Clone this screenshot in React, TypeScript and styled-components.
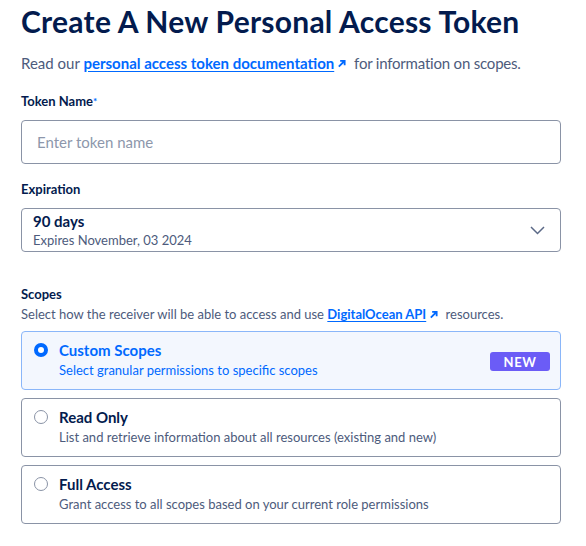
import React from "react";
import styled, { createGlobalStyle } from "styled-components";

const Global = createGlobalStyle`
  html, body { margin: 0; padding: 0; background: #ffffff; }
  body { font-family: Lato, "Noto Sans", sans-serif; color: #031b4e; }
  * { box-sizing: border-box; }
`;

const Page = styled.div`
  padding: 2px 25px 0 21px;
  display: flex;
  flex-direction: column;
`;

const Title = styled.h1`
  margin: 0;
  font-size: 30px;
  line-height: 38px;
  font-weight: 700;
  letter-spacing: 0.25px;
  color: #031b4e;
`;

const Lead = styled.p`
  margin: 13px 0 0;
  font-size: 15px;
  line-height: 20px;
  color: #4d5b7c;
`;

const Tail = styled.span`
  letter-spacing: -0.2px;
`;

const Link = styled.a`
  color: #0069ff;
  font-weight: 700;
  text-decoration: underline;
  text-underline-offset: 2px;
  display: inline-flex;
  align-items: center;
  gap: 3px;
  margin-right: 4px;
`;

const Field = styled.div<{ $top: number }>`
  margin-top: ${(p) => p.$top}px;
  display: flex;
  flex-direction: column;
`;

const Label = styled.label`
  font-size: 13px;
  line-height: 18px;
  font-weight: 700;
  color: #031b4e;
  margin-bottom: 10px;
`;

const SectionLabel = styled.div`
  font-size: 13px;
  line-height: 18px;
  font-weight: 700;
  color: #031b4e;
`;

const Star = styled.span`
  color: #0069ff;
  font-size: 10px;
  vertical-align: top;
`;

const Input = styled.input`
  height: 44px;
  width: 100%;
  border: 1px solid #8a93a6;
  border-radius: 4px;
  padding: 0 15px;
  font-family: inherit;
  font-size: 15px;
  color: #031b4e;
  &::placeholder { color: #8d97ab; }
`;

const Select = styled.div`
  height: 44px;
  border: 1px solid #8a93a6;
  border-radius: 4px;
  padding: 0 15px 0 11px;
  display: flex;
  align-items: center;
  justify-content: space-between;
`;

const SelectText = styled.div`
  display: flex;
  flex-direction: column;
`;

const SelectValue = styled.span`
  font-size: 15px;
  line-height: 20px;
  font-weight: 700;
  color: #031b4e;
`;

const SelectHint = styled.span`
  font-size: 13px;
  line-height: 18px;
  color: #4d5b7c;
`;

const Desc = styled.p`
  margin: 2px 0 8px;
  font-size: 13px;
  line-height: 18px;
  color: #4d5b7c;
`;

const Cards = styled.div`
  display: flex;
  flex-direction: column;
  gap: 8px;
`;

const Card = styled.div<{ $active?: boolean }>`
  height: 59px;
  border: 1px solid ${(p) => (p.$active ? "#8ab6f9" : "#8a93a6")};
  background: ${(p) => (p.$active ? "#f3f7fe" : "#ffffff")};
  border-radius: 4px;
  padding: 8px 10px 0 12px;
  display: grid;
  grid-template-columns: 25px 1fr auto;
`;

const Radio = styled.span<{ $active?: boolean }>`
  margin-top: 3px;
  width: 14px;
  height: 14px;
  border-radius: 50%;
  border: ${(p) => (p.$active ? "4px solid #0069ff" : "1px solid #8a93a6")};
  background: #fff;
`;

const CardBody = styled.div`
  display: flex;
  flex-direction: column;
`;

const CardTitle = styled.span<{ $active?: boolean }>`
  font-size: 15px;
  line-height: 20px;
  font-weight: 700;
  color: ${(p) => (p.$active ? "#0069ff" : "#031b4e")};
`;

const CardDesc = styled.span<{ $active?: boolean }>`
  margin-top: 1px;
  font-size: 13px;
  line-height: 18px;
  color: ${(p) => (p.$active ? "#0069ff" : "#4d5b7c")};
`;

const Badge = styled.span`
  align-self: start;
  margin-top: 12px;
  width: 60px;
  height: 19px;
  border-radius: 3px;
  background: #6b5cf6;
  color: #fff;
  font-size: 13px;
  font-weight: 700;
  letter-spacing: 0.6px;
  display: flex;
  align-items: center;
  justify-content: center;
`;

const Arrow = () => (
  <svg width="9" height="9" viewBox="0 0 10 10" fill="none">
    <path d="M2 8.5 L8 2.5 M3.5 2 H8.5 V7" stroke="#0069ff" strokeWidth="2" />
  </svg>
);

const Chevron = () => (
  <svg width="15" height="9" viewBox="0 0 15 9" fill="none">
    <path d="M1 1 L7.5 7.5 L14 1" stroke="#5b6987" strokeWidth="1.5" />
  </svg>
);

const scopes = [
  { title: "Custom Scopes", desc: "Select granular permissions to specific scopes", active: true, badge: true },
  { title: "Read Only", desc: "List and retrieve information about all resources (existing and new)" },
  { title: "Full Access", desc: "Grant access to all scopes based on your current role permissions" },
];

export default function App() {
  return (
    <>
      <Global />
      <Page>
        <Title>Create A New Personal Access Token</Title>
        <Lead>
          Read our{" "}
          <Link href="#">
            personal access token documentation <Arrow />
          </Link>{" "}
          <Tail>for information on scopes.</Tail>
        </Lead>
        <Field $top={19}>
          <Label>
            Token Name<Star>*</Star>
          </Label>
          <Input placeholder="Enter token name" />
        </Field>
        <Field $top={16}>
          <Label>Expiration</Label>
          <Select>
            <SelectText>
              <SelectValue>90 days</SelectValue>
              <SelectHint>Expires November, 03 2024</SelectHint>
            </SelectText>
            <Chevron />
          </Select>
        </Field>
        <Field $top={33}>
          <SectionLabel>Scopes</SectionLabel>
          <Desc>
            Select how the receiver will be able to access and use{" "}
            <Link href="#">
              DigitalOcean API <Arrow />
            </Link>{" "}
            resources.
          </Desc>
          <Cards>
            {scopes.map((s) => (
              <Card key={s.title} $active={s.active}>
                <Radio $active={s.active} />
                <CardBody>
                  <CardTitle $active={s.active}>{s.title}</CardTitle>
                  <CardDesc $active={s.active}>{s.desc}</CardDesc>
                </CardBody>
                {s.badge ? <Badge>NEW</Badge> : <span />}
              </Card>
            ))}
          </Cards>
        </Field>
      </Page>
    </>
  );
}
